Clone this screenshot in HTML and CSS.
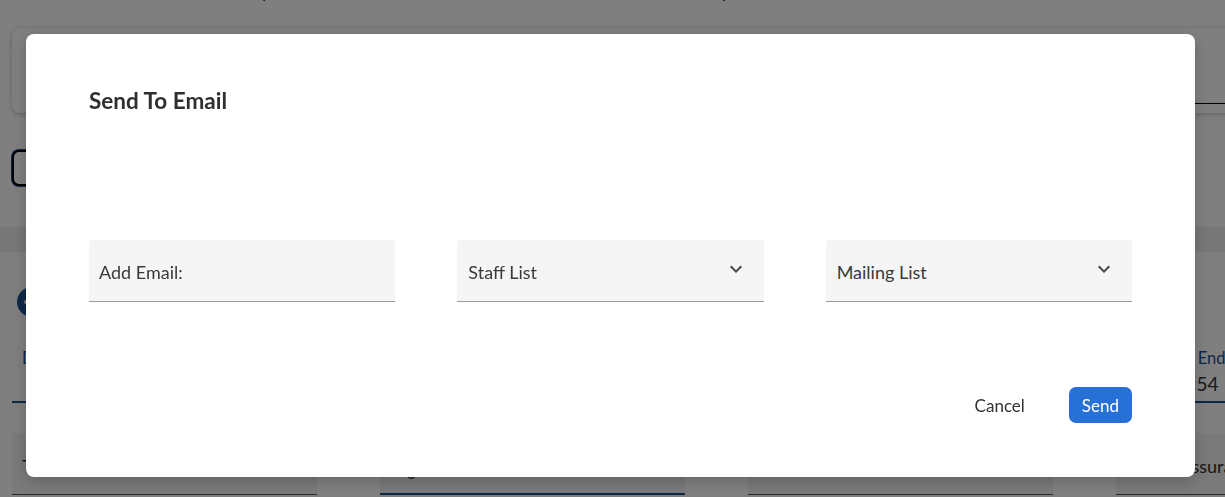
FILE: index.html
```html
<!DOCTYPE html>
<html lang="en">

<head>
  <meta charset="UTF-8" />
  <meta name="viewport" content="width=device-width, initial-scale=1.0" />
  <title>Send To Email</title>
  <link rel="stylesheet" href="styles.css">
</head>

<body>
  <div class="page">
    <div class="page-head">
      <span class="head-a">Weekly</span>
      <span class="head-b">Report</span>
    </div>

    <div class="card">
      <div class="grid">
        <div class="line-field"></div>
        <div class="line-field"></div>
        <div class="line-field"></div>
        <div class="line-field underline"></div>
      </div>
    </div>

    <div class="toolbar">
      <button class="ghost-btn">Filters</button>
    </div>

    <div class="band"></div>

    <section class="section">
      <div class="section-title">
        <svg width="30" height="30" viewBox="0 0 30 30">
          <circle cx="15" cy="15" r="15" fill="#1d4f91" />
          <circle cx="9" cy="15" r="2" fill="#fff" />
          <circle cx="15" cy="15" r="2" fill="#fff" />
          <circle cx="21" cy="15" r="2" fill="#fff" />
        </svg>
        <span>Schedule</span>
      </div>

      <div class="grid head-row">
        <div class="cell"><span class="cell-label">Date</span><span class="cell-value"></span></div>
        <div class="cell"><span class="cell-label">Start</span><span class="cell-value">09:00</span></div>
        <div class="cell"><span class="cell-label">Break</span><span class="cell-value">0</span></div>
        <div class="cell"><span class="cell-label">Expected End</span><span class="cell-value">Mon 10:54</span></div>
      </div>

      <div class="grid">
        <div class="fill-field"><span>Total</span></div>
        <div class="fill-field active"><span class="val">0</span></div>
        <div class="fill-field"><span>Notes</span></div>
        <div class="fill-field"><span>Safety Assurance</span></div>
      </div>
    </section>
  </div>

  <div class="overlay">
    <div class="dialog">
      <h2>Send To Email</h2>

      <div class="fields">
        <div class="field"><span>Add Email:</span></div>
        <div class="field">
          <span>Staff List</span>
          <svg class="chevron" width="24" height="24" viewBox="0 0 24 24">
            <path d="M16.59 8.59L12 13.17 7.41 8.59 6 10l6 6 6-6z" />
          </svg>
        </div>
        <div class="field">
          <span>Mailing List</span>
          <svg class="chevron" width="24" height="24" viewBox="0 0 24 24">
            <path d="M16.59 8.59L12 13.17 7.41 8.59 6 10l6 6 6-6z" />
          </svg>
        </div>
      </div>

      <div class="actions">
        <button class="btn-text">Cancel</button>
        <button class="btn-primary">Send</button>
      </div>
    </div>
  </div>
</body>

</html>
```

FILE: styles.css
```css
body,
html {
  margin: 0;
  height: 100%;
  overflow: hidden;
}

body {
  font-family: Lato, "Noto Sans", sans-serif;
  color: #333;
  background-color: #fff;
}

/* page behind the dialog */
.page {
  width: 1440px;
}

.page-head {
  height: 28px;
}

.page-head span {
  display: inline-block;
  margin-top: -22px;
  line-height: 24px;
  font-size: 20px;
  vertical-align: top;
}

.head-a {
  margin-left: 205px;
}

.head-b {
  margin-left: 424px;
}

.grid {
  display: grid;
  grid-template-columns: repeat(4, 305px);
  column-gap: 63px;
}

.card {
  margin-left: 12px;
  height: 85px;
  box-sizing: border-box;
  padding-top: 13px;
  background-color: #fff;
  border-radius: 8px;
  box-shadow: 0 1px 5px rgba(0, 0, 0, 0.25);
}

.card .grid {
  margin-left: -12px;
}

.line-field {
  height: 63px;
}

.line-field.underline {
  box-sizing: border-box;
  border-bottom: 1px solid #000;
}

.toolbar {
  height: 114px;
  padding-left: 12px;
  box-sizing: border-box;
  padding-top: 37px;
}

.ghost-btn {
  height: 36px;
  width: 110px;
  background: #fff;
  border: 2px solid #000;
  border-radius: 7px;
  box-shadow: 0 0 0 1px #1f4f9a;
  font-family: inherit;
  font-size: 16px;
}

.band {
  height: 25px;
  background-color: #eee;
}

.section {
  padding-left: 12px;
}

.section-title {
  display: flex;
  align-items: center;
  gap: 10px;
  margin-top: 35px;
  margin-left: 5px;
  height: 30px;
  font-size: 20px;
  font-weight: bold;
}

.head-row {
  margin-top: 24px;
}

.cell {
  height: 62px;
  box-sizing: border-box;
  padding: 7px 10px 0;
  border-bottom: 2px solid #1d4f91;
  display: flex;
  flex-direction: column;
}

.cell-label {
  font-size: 16.5px;
  line-height: 20px;
  color: #1d4f91;
}

.cell-value {
  font-size: 19px;
  line-height: 23px;
  color: #333;
  margin-top: 4px;
}

.head-row + .grid {
  margin-top: 30px;
}

.fill-field {
  height: 62px;
  box-sizing: border-box;
  padding: 22px 10px 0;
  background-color: #f4f4f4;
  border-bottom: 1px solid #555;
  font-size: 18px;
}

.fill-field.active {
  padding-top: 28px;
  border-bottom: 2px solid #1d4f91;
}

.fill-field .val {
  padding-left: 16px;
}

/* dialog */
.overlay {
  position: fixed;
  top: 0;
  left: 0;
  right: 0;
  bottom: 0;
  background-color: rgba(0, 0, 0, 0.5);
  padding: 34px 0 0 26px;
}

.dialog {
  width: 1169px;
  height: 443px;
  box-sizing: border-box;
  padding: 54px 63px 0;
  background-color: #fff;
  border-radius: 8px;
  box-shadow: 0 4px 16px rgba(0, 0, 0, 0.2);
  display: flex;
  flex-direction: column;
}

.dialog h2 {
  margin: 0;
  font-size: 22.5px;
  line-height: 26px;
  font-weight: bold;
  color: #2f2f2f;
}

.fields {
  display: grid;
  grid-template-columns: repeat(3, 1fr);
  column-gap: 62px;
  margin-top: 126px;
}

.field {
  position: relative;
  height: 62px;
  box-sizing: border-box;
  padding: 21px 11px 0;
  background-color: #f5f5f5;
  border-radius: 4px 4px 0 0;
  border-bottom: 1px solid #9a9a9a;
  font-size: 18px;
  color: #3a3a3a;
}

.field:first-child {
  padding-left: 10px;
}

.chevron {
  position: absolute;
  top: 17px;
  right: 16px;
  fill: #4a4a4a;
}

.actions {
  display: flex;
  justify-content: flex-end;
  gap: 32px;
  margin-top: 85px;
}

.actions button {
  height: 36px;
  font-family: inherit;
  font-size: 17px;
  border: none;
  border-radius: 7px;
  cursor: pointer;
}

.btn-text {
  padding: 0 12px;
  background: none;
  color: #333;
}

.btn-primary {
  padding: 0 13px;
  background-color: #2670d6;
  color: #fff;
}
```
